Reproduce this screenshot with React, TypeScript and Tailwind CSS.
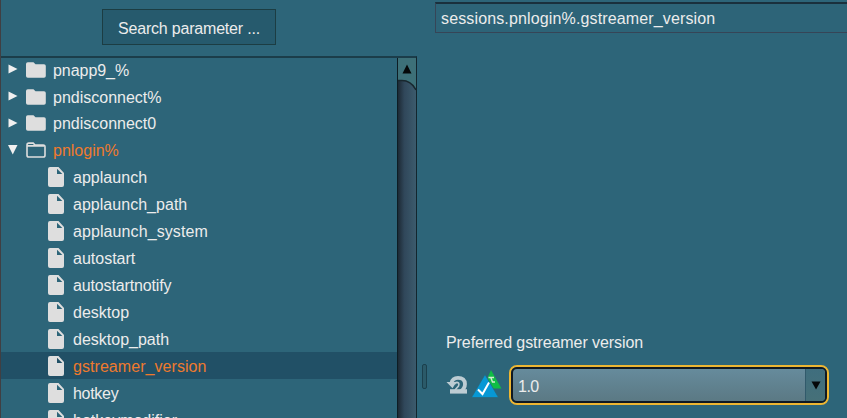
import React from "react";

type Row = { label: string; kind: "closed" | "open" | "file"; selected?: boolean; track?: string };

const rows: Row[] = [
  { label: "pnapp9_%", kind: "closed", track: "tracking-[-0.05px]" },
  { label: "pndisconnect%", kind: "closed" },
  { label: "pndisconnect0", kind: "closed" },
  { label: "pnlogin%", kind: "open" },
  { label: "applaunch", kind: "file", track: "tracking-[0.03px]" },
  { label: "applaunch_path", kind: "file", track: "tracking-[0.03px]" },
  { label: "applaunch_system", kind: "file", track: "tracking-[0.09px]" },
  { label: "autostart", kind: "file" },
  { label: "autostartnotify", kind: "file", track: "tracking-[-0.14px]" },
  { label: "desktop", kind: "file" },
  { label: "desktop_path", kind: "file" },
  { label: "gstreamer_version", kind: "file", selected: true, track: "tracking-[0.06px]" },
  { label: "hotkey", kind: "file", track: "tracking-[-0.3px]" },
  { label: "hotkeymodifier", kind: "file" },
];

function FolderIcon({ open }: { open: boolean }) {
  return (
    <svg width="20" height="17" viewBox="0 0 20 17" className="mt-[2px] shrink-0">
      {open ? (
        <path d="M1 3Q1 1.1 2.8 1.1H7.2L9 3H17.2Q19 3 19 4.8V13.2Q19 15 17.2 15H2.8Q1 15 1 13.2ZM1 3.9H18" fill="none" stroke="#dedede" strokeWidth="1.6" />
      ) : (
        <path d="M0 2Q0 .3 1.8 .3H7.5L9.5 2.2H18Q19.8 2.2 19.8 4V14Q19.8 15.8 18 15.8H1.8Q0 15.8 0 14Z" fill="#dedede" />
      )}
    </svg>
  );
}

function FileIcon() {
  return (
    <svg width="16" height="20" viewBox="0 0 16 20" className="shrink-0">
      <path fillRule="evenodd" d="M2 0H10.5L16 6V18Q16 20 14 20H2Q0 20 0 18V2Q0 0 2 0ZM9 1.8V7H14.3Z" fill="#dedede" />
    </svg>
  );
}

function TreeRow({ row }: { row: Row }) {
  const orange = row.kind === "open" || row.selected;
  return (
    <div className={`flex h-[26.94px] shrink-0 items-center ${row.selected ? "bg-[#215066]" : ""} ${orange ? "text-[#ef7a2d]" : "text-[#ececec]"}`}>
      {row.kind === "file" ? (
        <div className="flex w-[72px] items-center pl-[47px] pt-px"><FileIcon /></div>
      ) : (
        <div className="flex w-[52px] items-center pl-[7px]">
          <svg width="10" height="10" viewBox="0 0 10 10" className="mr-[8px] shrink-0">
            <path d={row.kind === "open" ? "M0 0H9.5L4.75 9.5Z" : "M.5 .5L9.5 5L.5 9.5Z"} fill="#f0f0f0" />
          </svg>
          <FolderIcon open={row.kind === "open"} />
        </div>
      )}
      <span className={`mt-[3px] whitespace-nowrap leading-[22px] ${row.track ?? ""}`}>{row.label}</span>
    </div>
  );
}

export default function App() {
  return (
    <div className="flex h-[418px] w-[847px] overflow-hidden bg-[#2d6579] font-['Liberation_Sans',Arial,sans-serif] text-[16px] text-[#ececec]">
      <div className="flex w-[417px] shrink-0 flex-col border-l border-[#403f43]">
        <div className="flex h-[56px] shrink-0 pt-[9px] pl-[101px]">
          <button className="flex h-[36px] w-[174px] items-center justify-center whitespace-nowrap border border-[#1c3d43] bg-[#265a6d] pt-[3px] tracking-[-0.2px]">
            Search parameter ...
          </button>
        </div>
        <div className="flex h-[362px] shrink-0 border-t-2 border-r border-t-[#1b3d4a] border-r-[#13262e]">
          <div className="-mt-[2.4px] flex h-[362.4px] w-[396px] shrink-0 flex-col overflow-hidden">
            {rows.map((row) => <TreeRow key={row.label} row={row} />)}
          </div>
          <div className="flex w-[19px] flex-col border-l border-[#0d1d24] bg-gradient-to-r from-[#1d2a35] via-[#30475a] via-35% to-[#3c5b6d]">
            <svg width="18" height="34" viewBox="0 0 18 34">
              <path d="M0 0H18V32Q13 22 4 22H0Z" fill="#3d7078" />
              <path d="M0 22.5H4Q13 22.5 18 32" fill="none" stroke="#18272e" strokeWidth="1.5" />
              <path d="M9 6.5L13.5 15.5H4.5Z" fill="#050808" />
            </svg>
          </div>
        </div>
      </div>
      <div className="flex w-[18px] shrink-0 pt-[364px] pl-[5px]">
        <div className="h-[25px] w-[5px] rounded-[2px] border border-[#1b404d] bg-[#2b5a69]" />
      </div>
      <div className="flex flex-1 flex-col">
        <div className="mt-[2px] flex h-[31px] shrink-0 items-center border-y border-l border-t-2 border-[#364557] border-t-[#1a303d] bg-[#2d6478] pl-[5px] pt-[2px] tracking-[0.14px]">
          sessions.pnlogin%.gstreamer_version
        </div>
        <div className="mt-[299px] ml-[11px] h-[21px] leading-[22px] tracking-[-0.08px]">Preferred gstreamer version</div>
        <div className="mt-[12px] ml-[11px] flex items-start">
          <svg width="22" height="20" viewBox="0 0 22 20" className="mt-[10px]">
            <path d="M5.5 8Q6.5 2.8 12 2.8Q19 2.8 19 9Q19 13.5 14.5 16.5" fill="none" stroke="#bdccd3" strokeWidth="3.8" />
            <path d="M8.5 9.2Q9 7.4 11 7.4Q13.8 7.5 12.5 11L9 15" fill="none" stroke="#bdccd3" strokeWidth="1.6" />
            <path d="M4 14.2H21V18.6H4Z" fill="#bdccd3" />
            <path d="M.5 7H10.5L6.5 13.2Z" fill="#bdccd3" />
          </svg>
          <svg width="31" height="29" viewBox="0 0 31 29" className="ml-[3px] mt-[5px]">
            <path d="M20 0L30.5 18.5H12Z" fill="#10bd45" />
            <path d="M17.5 7.5H23M20 8L21.5 12L24 12" fill="none" stroke="#d1edcf" strokeWidth="1.4" />
            <path d="M14 4.5L27.5 27.5H0.5Z" fill="#0798d5" stroke="#2b6679" strokeWidth=".7" />
            <path d="M7 19.5L11.5 24L18 12.5" fill="none" stroke="#fff" strokeWidth="2" />
          </svg>
          <div className="ml-[7px] h-[40px] w-[320px] rounded-[8px] border-2 border-[#edb632]">
            <div className="flex h-full overflow-hidden rounded-[6px] border-2 border-[#101922] bg-gradient-to-b from-[#668b9c] to-[#5b7984]">
              <div className="flex flex-1 items-center pt-[3px] pl-[5px] tracking-[-0.5px]">1.0</div>
              <div className="flex w-[20px] items-center justify-center border-l border-[#315a6b] bg-gradient-to-b from-[#3f6e7e] to-[#467078]">
                <svg width="10" height="9" viewBox="0 0 10 9"><path d="M.5 .5H9.5L5 8.5Z" fill="#05080a" /></svg>
              </div>
            </div>
          </div>
        </div>
      </div>
    </div>
  );
}
